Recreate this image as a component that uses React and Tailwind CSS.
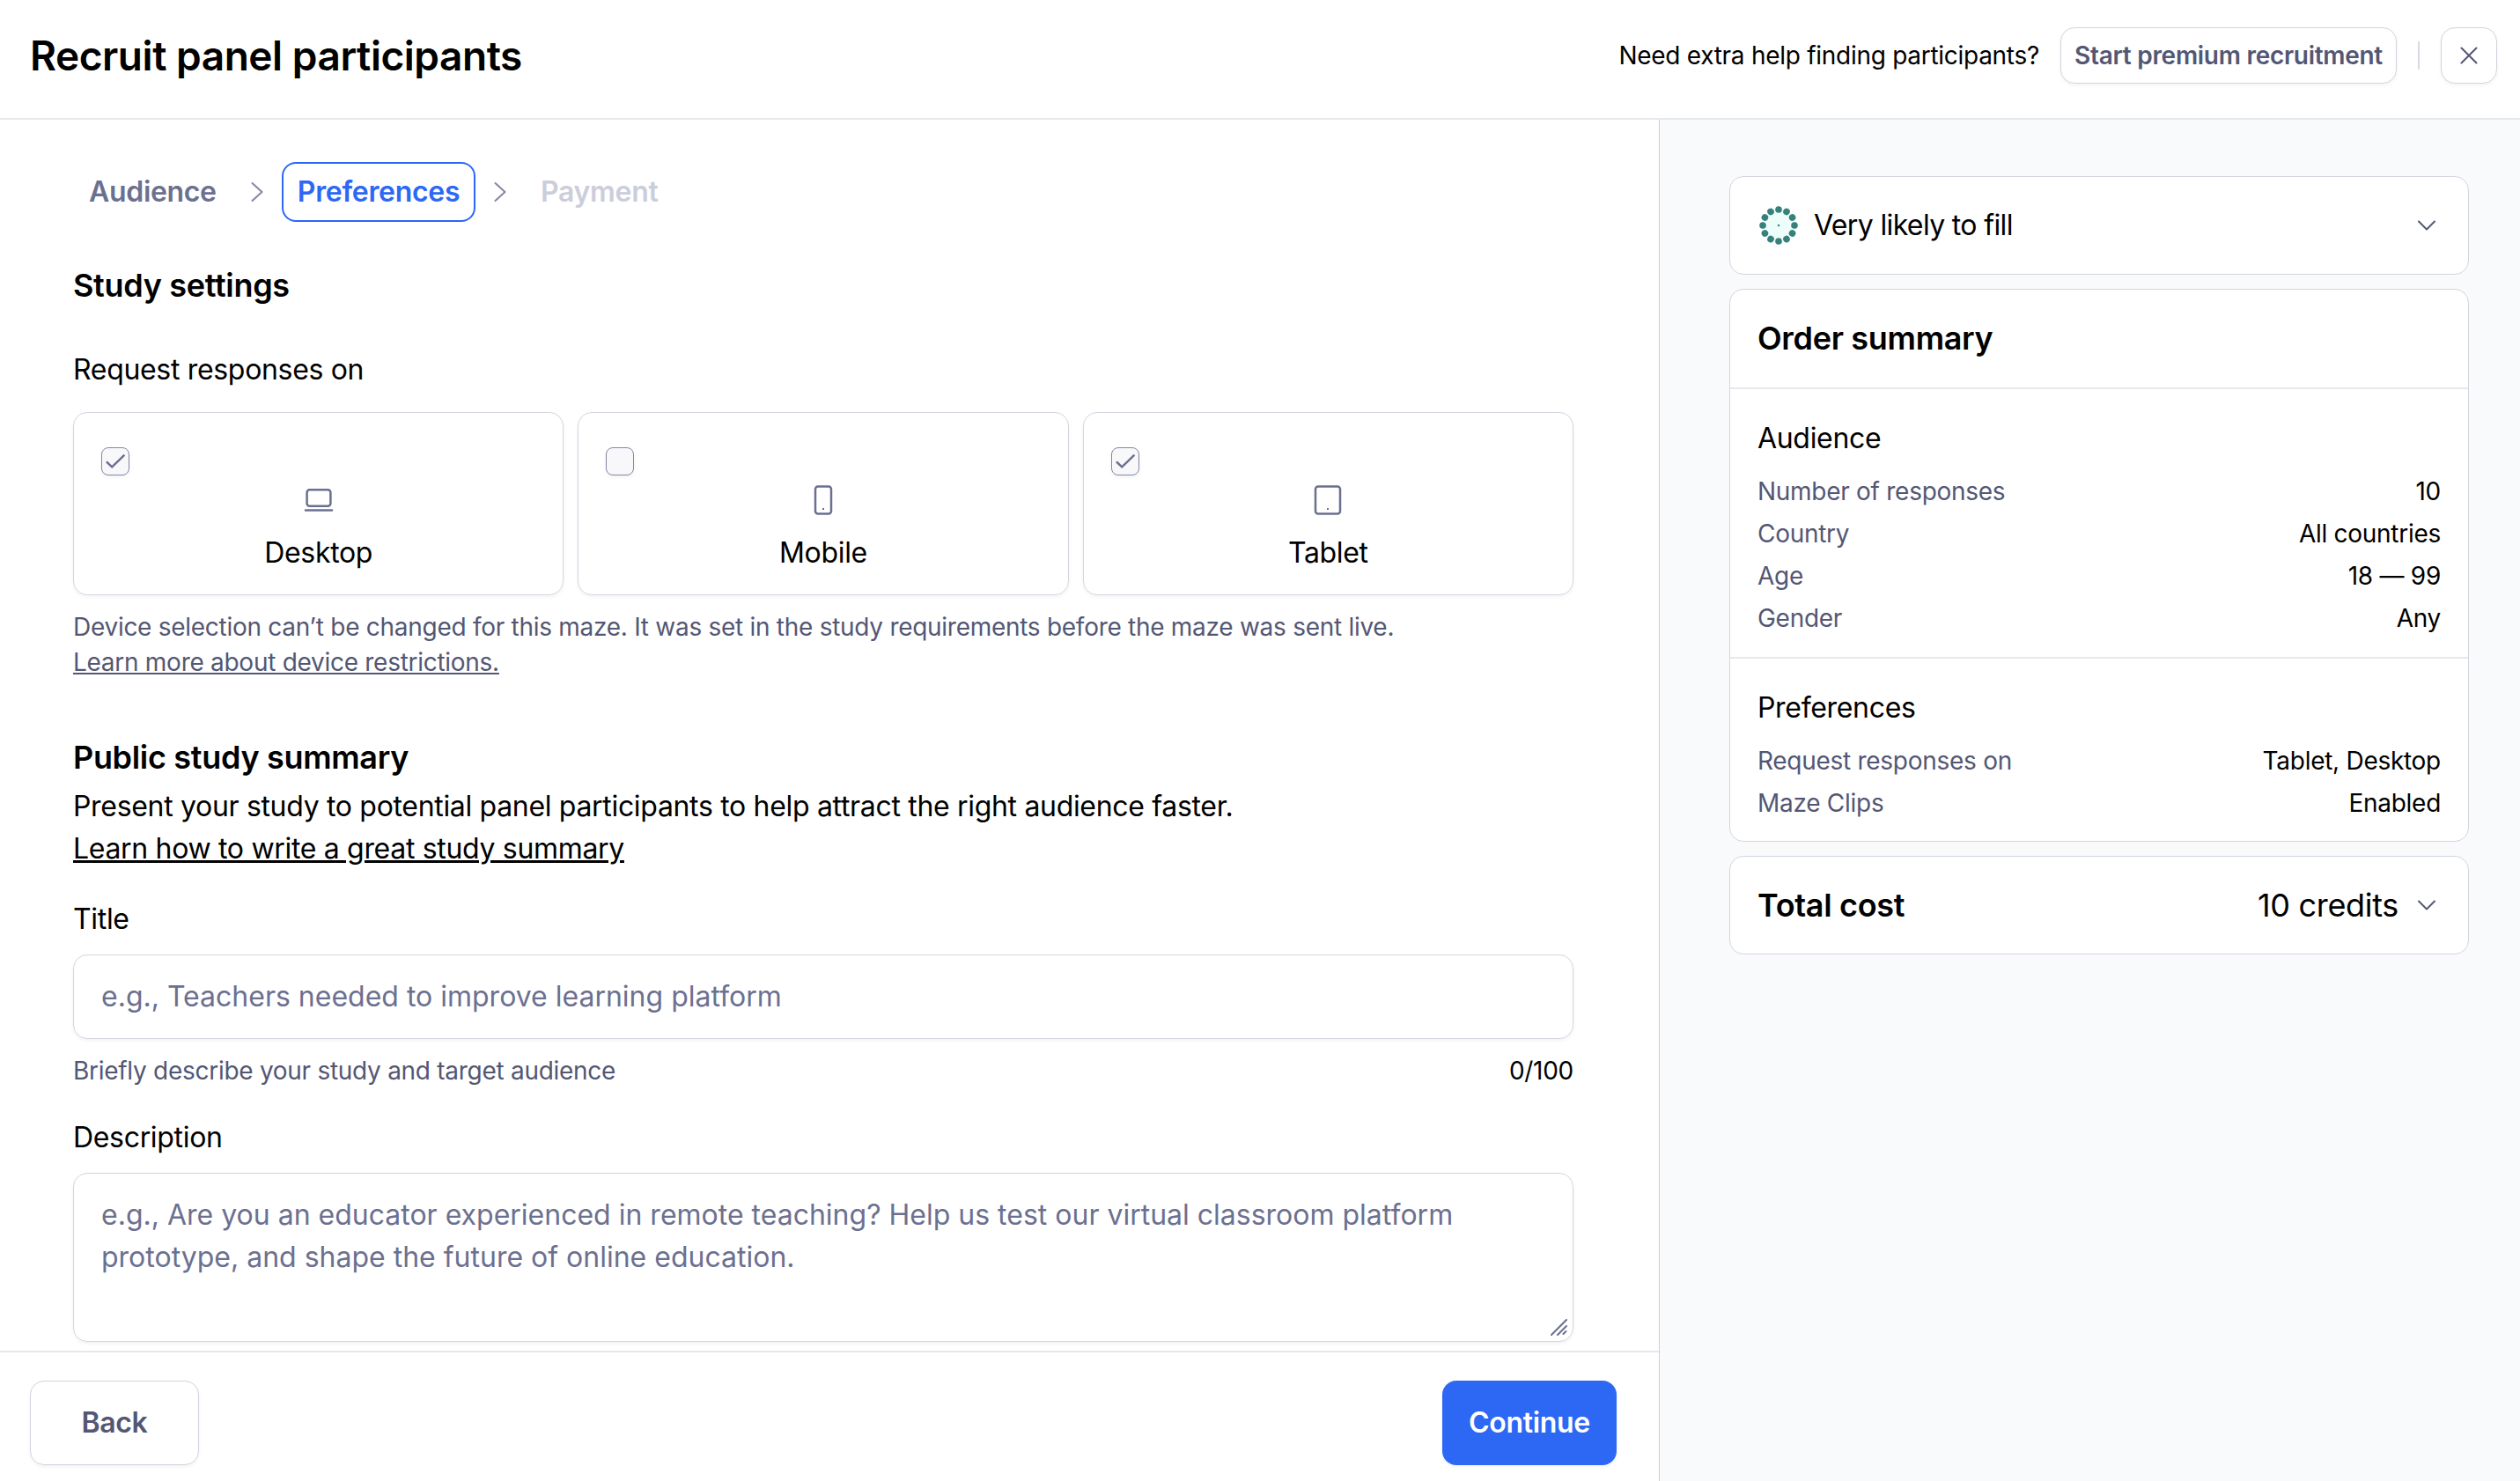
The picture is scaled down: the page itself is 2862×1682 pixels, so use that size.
import React from "react";

const Chevron = ({ className, d }) => (
  <svg className={className} viewBox="0 0 32 32" fill="none">
    <path d={d} stroke="currentColor" strokeWidth="2" strokeLinecap="round" strokeLinejoin="round" />
  </svg>
);

const DOWN = "M7 11.5l9 9 9-9";
const RIGHT = "M10.5 6l11 10-11 10";

const LaptopIcon = () => (
  <svg className="h-10 w-10" viewBox="0 0 40 40" fill="none" stroke="currentColor" strokeWidth="2.5">
    <rect x="6.6" y="8.25" width="26.8" height="18.5" rx="3" />
    <path d="M5 31.6h30" strokeLinecap="round" />
  </svg>
);

const PhoneIcon = () => (
  <svg className="h-10 w-10" viewBox="0 0 40 40" fill="none" stroke="currentColor" strokeWidth="2.5">
    <rect x="11" y="4.5" width="18" height="31" rx="3" />
    <path d="M19 30h2" strokeWidth="2" />
  </svg>
);

const TabletIcon = () => (
  <svg className="h-10 w-10" viewBox="0 0 40 40" fill="none" stroke="currentColor" strokeWidth="2.5">
    <rect x="6" y="4.5" width="28" height="31" rx="3" />
    <path d="M19 30h2" strokeWidth="2" />
  </svg>
);

const devices = [
  { name: "Desktop", checked: true, Icon: LaptopIcon },
  { name: "Mobile", checked: false, Icon: PhoneIcon },
  { name: "Tablet", checked: true, Icon: TabletIcon },
];

const audience = [
  ["Number of responses", "10"],
  ["Country", "All countries"],
  ["Age", "18 — 99"],
  ["Gender", "Any"],
];

const preferences = [
  ["Request responses on", "Tablet, Desktop"],
  ["Maze Clips", "Enabled"],
];

const Header = () => (
  <header className="flex h-[136px] shrink-0 items-center justify-between border-b-2 border-[#e7e7ee] pr-[26px] pb-2 pl-[34px]">
    <h1 className="text-[46px] font-semibold tracking-[-0.01em]">Recruit panel participants</h1>
    <div className="flex items-center text-[28px] tracking-[-0.01em]">
      <span>Need extra help finding participants?</span>
      <button className="ml-6 h-16 w-[382px] rounded-2xl border border-[#d3d3de] font-semibold whitespace-nowrap text-[#535774] shadow-[0_2px_4px_rgba(0,0,0,0.05)]">
        Start premium recruitment
      </button>
      <span className="mx-6 h-8 w-0.5 bg-[#d9d9e2]" />
      <button className="flex h-16 w-16 items-center justify-center rounded-2xl border border-[#d3d3de] text-[#535774] shadow-[0_2px_4px_rgba(0,0,0,0.05)]">
        <svg className="h-8 w-8" viewBox="0 0 32 32" fill="none" stroke="currentColor" strokeWidth="2">
          <path d="M7.5 7.5l17 17M24.5 7.5l-17 17" strokeLinecap="round" />
        </svg>
      </button>
    </div>
  </header>
);

const Steps = () => (
  <nav className="mt-12 flex h-[68px] items-center text-[32px] font-semibold">
    <span className="w-[180px] pl-[18px] text-[#6c7090]">Audience</span>
    <Chevron className="ml-[13px] h-8 w-8 text-[#8487a3]" d={RIGHT} />
    <span className="ml-3 flex h-[68px] w-[220px] items-center justify-center rounded-2xl border-2 border-[#2d68f5] text-[#2d68f5]">
      Preferences
    </span>
    <Chevron className="ml-3 h-8 w-8 text-[#8487a3]" d={RIGHT} />
    <span className="ml-[30px] text-[#cccddb]">Payment</span>
  </nav>
);

const DeviceCard = ({ name, checked, Icon }) => (
  <div className="relative flex h-[208px] flex-1 flex-col items-center rounded-2xl border border-[#d5d5e0] pt-[79px] shadow-[0_2px_4px_rgba(0,0,0,0.05)]">
    <span className="absolute top-[39px] left-[31px] flex h-8 w-8 items-center justify-center rounded-lg border border-[#8487a3] bg-[#f8f8fb] shadow-[0_2px_4px_rgba(0,0,0,0.05)]">
      {checked && (
        <svg className="h-8 w-8 shrink-0 text-[#6c7090]" viewBox="0 0 32 32" fill="none">
          <path d="M5.9 16.3l6.3 6L26.4 8.7" stroke="currentColor" strokeWidth="2.5" />
        </svg>
      )}
    </span>
    <span className="text-[#6c7090]">
      <Icon />
    </span>
    <span className="mt-4 text-[32px] leading-[48px]">{name}</span>
  </div>
);

const Form = () => (
  <div className="flex-1 overflow-hidden pl-[83px] pr-[97px]">
    <Steps />
    <h2 className="mt-12 text-[36px] leading-[48px] font-semibold">Study settings</h2>
    <p className="mt-12 text-[32px] leading-[48px]">Request responses on</p>
    <div className="mt-6 flex gap-4">
      {devices.map((d) => (
        <DeviceCard key={d.name} {...d} />
      ))}
    </div>
    <div className="mt-4 text-[28px] leading-[40px] tracking-[-0.01em] text-[#535774]">
      <p>
        Device selection can’t be changed for this maze. It was set in the study requirements before
        the maze was sent live.
      </p>
      <a className="underline">Learn more about device restrictions.</a>
    </div>
    <h2 className="mt-16 text-[36px] leading-[48px] font-semibold">Public study summary</h2>
    <div className="mt-2 text-[32px] leading-[48px]">
      <p>Present your study to potential panel participants to help attract the right audience faster.</p>
      <a className="underline decoration-[3px]">Learn how to write a great study summary</a>
    </div>
    <p className="mt-8 text-[32px] leading-[48px]">Title</p>
    <div className="mt-4 flex h-24 items-center rounded-2xl border border-[#d5d5e0] px-[31px] text-[32px] tracking-normal text-[#6c7090] shadow-[0_2px_4px_rgba(0,0,0,0.05)]">
      e.g., Teachers needed to improve learning platform
    </div>
    <div className="mt-4 flex justify-between text-[28px] leading-[40px] tracking-[-0.01em]">
      <span className="text-[#535774]">Briefly describe your study and target audience</span>
      <span>0/100</span>
    </div>
    <p className="mt-8 text-[32px] leading-[48px]">Description</p>
    <div className="relative mt-4 h-[192px] rounded-2xl border border-[#d5d5e0] px-[31px] pt-[23px] text-[32px] leading-[48px] tracking-normal text-[#6c7090] shadow-[0_2px_4px_rgba(0,0,0,0.05)]">
      e.g., Are you an educator experienced in remote teaching? Help us test our virtual classroom
      platform prototype, and shape the future of online education.
      <svg className="absolute right-[6px] bottom-[6px] h-[19px] w-[19px]" viewBox="0 0 19 19" fill="none">
        <path
          d="M1 18L18 1M8 18L18 8M14.5 17l3-3"
          stroke="currentColor"
          strokeWidth="2"
          strokeLinecap="round"
        />
      </svg>
    </div>
  </div>
);

const Rows = ({ title, rows }) => (
  <div className="px-[31px] pt-8 pb-5">
    <h3 className="mb-3 text-[32px] leading-[48px]">{title}</h3>
    {rows.map(([label, value]) => (
      <div key={label} className="flex justify-between text-[28px] leading-[48px] tracking-[-0.01em]">
        <span className="text-[#535774]">{label}</span>
        <span>{value}</span>
      </div>
    ))}
  </div>
);

const LikelyIcon = () => (
  <svg className="h-12 w-12" viewBox="0 0 48 48">
    <circle cx="24" cy="24" r="20" fill="#ecfdfa" />
    <g fill="#37807c">
      {[...Array(12)].map((_, i) => (
        <circle key={i} cx="24" cy="6" r="3.8" transform={`rotate(${i * 30} 24 24)`} />
      ))}
      <circle cx="24" cy="24" r="1.2" />
    </g>
  </svg>
);

const Sidebar = () => (
  <aside className="flex w-[978px] shrink-0 flex-col gap-4 border-l border-[#cfd0dc] bg-[#f9fafc] pt-16 pr-[58px] pl-[79px]">
    <div className="flex h-[112px] items-center rounded-2xl border border-[#d5d5e0] bg-white px-[31px]">
      <LikelyIcon />
      <span className="ml-4 flex-1 text-[32px] tracking-[-0.02em]">Very likely to fill</span>
      <Chevron className="h-8 w-8 text-[#535774]" d={DOWN} />
    </div>
    <div className="h-[628px] rounded-2xl border border-[#d5d5e0] bg-white">
      <h2 className="px-[31px] pt-[31px] pb-8 text-[36px] leading-[48px] font-semibold">Order summary</h2>
      <div className="border-t-2 border-[#e7e7ee]">
        <Rows title="Audience" rows={audience} />
      </div>
      <div className="border-t-2 border-[#e7e7ee]">
        <Rows title="Preferences" rows={preferences} />
      </div>
    </div>
    <div className="flex h-[112px] items-center rounded-2xl border border-[#d5d5e0] bg-white px-[31px] text-[36px]">
      <span className="flex-1 font-semibold">Total cost</span>
      <span>10 credits</span>
      <Chevron className="ml-4 h-8 w-8 text-[#535774]" d={DOWN} />
    </div>
  </aside>
);

const App = () => {
  return (
    <div className="flex h-[1682px] w-[2862px] flex-col overflow-hidden bg-white font-['Inter',sans-serif] tracking-[-0.32px] text-black">
      <Header />
      <div className="flex min-h-0 flex-1">
        <main className="flex min-w-0 flex-1 flex-col">
          <Form />
          <footer className="flex h-[148px] shrink-0 justify-between border-t-2 border-[#e7e7ee] pt-8 pr-12 pl-[34px]">
            <button className="h-24 w-48 rounded-2xl border border-[#d3d3de] text-[32px] font-semibold text-[#535774] shadow-[0_2px_4px_rgba(0,0,0,0.05)]">
              Back
            </button>
            <button className="h-24 w-[198px] rounded-2xl bg-[#2d68f5] text-[32px] font-semibold text-white shadow-[0_2px_4px_rgba(0,0,0,0.05)]">
              Continue
            </button>
          </footer>
        </main>
        <Sidebar />
      </div>
    </div>
  );
};

export default App;
